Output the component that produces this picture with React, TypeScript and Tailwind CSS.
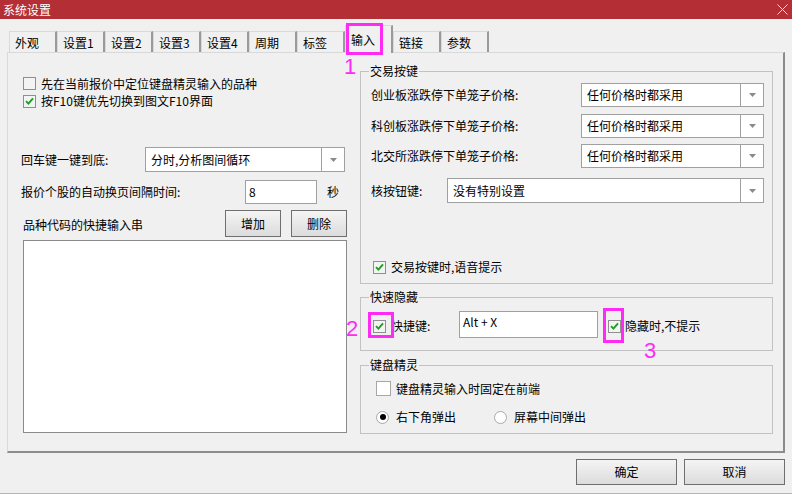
import React from "react";

function Check({ checked, big }: { checked?: boolean; big?: boolean }) {
  return (
    <span
      className={
        (big ? "w-[15px] h-[15px] bg-white border-[#a7a7a7] " : "w-[13px] h-[13px] bg-[#f3f3f3] border-[#8f8f8f] ") +
        "border flex items-center justify-center shrink-0"
      }
    >
      {checked && (
        <svg width="9" height="8" viewBox="0 0 9 8">
          <path d="M1 4.2 L3.4 6.6 L8 1.4" stroke="#1f9d22" strokeWidth="1.9" fill="none" />
        </svg>
      )}
    </span>
  );
}

function Radio({ checked }: { checked?: boolean }) {
  return (
    <span className="w-[13px] h-[13px] rounded-full border border-[#a9a9a9] bg-white flex items-center justify-center shrink-0">
      {checked && <span className="w-[6px] h-[6px] rounded-full bg-black" />}
    </span>
  );
}

function Arrow() {
  return (
    <svg width="7" height="4" viewBox="0 0 7 4">
      <path d="M0 0 H7 L3.5 4 Z" fill="#8a8a8a" />
    </svg>
  );
}

function Select({ text, className }: { text: string; className: string }) {
  return (
    <div className={className + " bg-white border border-[#a0a0a0] flex shrink-0"}>
      <div className="flex-1 flex items-center pl-[5px] whitespace-nowrap">{text}</div>
      <div className="w-[23px] border-l border-[#a0a0a0] flex items-center justify-center">
        <Arrow />
      </div>
    </div>
  );
}

function Btn({ text, className }: { text: string; className: string }) {
  return (
    <div
      className={
        className +
        " border border-[#6f6f6f] bg-gradient-to-b from-[#f4f4f4] to-[#dcdcdc] flex items-center justify-center shrink-0"
      }
    >
      {text}
    </div>
  );
}

const tabs = ["外观", "设置1", "设置2", "设置3", "设置4", "周期", "标签", "输入", "链接", "参数"];

export default function App() {
  return (
    <div className="relative w-[792px] h-[494px] bg-[#f0f0f0] border-b border-[#b4b4b4] overflow-hidden font-['Noto_Sans_CJK_SC','Microsoft_YaHei',sans-serif] text-[12px] leading-[16px] text-black">
      {/* title bar */}
      <div className="h-[19px] bg-[#b32e35] flex items-center justify-between pl-[3px] pr-[4px]">
        <span className="text-white text-[12px] leading-[16px]">系统设置</span>
        <svg width="11" height="11" viewBox="0 0 11 11">
          <path d="M0.5 0.5 L10.5 10.5 M10.5 0.5 L0.5 10.5" stroke="#f4dada" strokeWidth="1" />
        </svg>
      </div>

      {/* tabs */}
      <div className="mt-[6px] h-[27px] pl-[9px] flex items-end relative z-10">
        {tabs.map((t) =>
          t === "输入" ? (
            <div
              key={t}
              className="w-[48px] h-[28px] mb-[-1px] bg-[#f0f0f0] border-t border-l border-[#d9d9d9] border-r-2 border-r-[#9a9a9a] pl-[5px] pt-[6px]"
            >
              {t}
            </div>
          ) : (
            <div
              key={t}
              className="w-[48px] h-[21px] border-t border-l border-[#d9d9d9] border-r-2 border-r-[#9a9a9a] pl-[5px] pt-[3px]"
            >
              {t}
            </div>
          )
        )}
      </div>

      {/* panel */}
      <div className="ml-[7px] w-[778px] h-[401px] border-t border-l border-[#d9d9d9] border-r-2 border-b-2 border-r-[#8c8c8c] border-b-[#8c8c8c] flex">
        {/* left column */}
        <div className="w-[352px] pl-[13px] flex flex-col">
          <div className="mt-[21px] h-[19px] pl-[2px] flex items-center gap-[5px]">
            <Check />
            <span>先在当前报价中定位键盘精灵输入的品种</span>
          </div>
          <div className="h-[16px] pl-[2px] flex items-center gap-[5px]">
            <Check checked />
            <span>按F10键优先切换到图文F10界面</span>
          </div>
          <div className="mt-[38px] h-[25px] flex items-center">
            <span className="w-[124px]">回车键一键到底:</span>
            <Select text="分时,分析图间循环" className="w-[200px] h-[25px]" />
          </div>
          <div className="mt-[8px] h-[24px] flex items-center">
            <span className="w-[224px]">报价个股的自动换页间隔时间:</span>
            <div className="w-[72px] h-[24px] bg-white border border-[#a0a0a0] pl-[3px] flex items-center">8</div>
            <span className="ml-[10px]">秒</span>
          </div>
          <div className="mt-[6px] h-[27px] flex items-center">
            <span className="w-[204px] pl-[2px] pt-[3px]">品种代码的快捷输入串</span>
            <Btn text="增加" className="w-[56px] h-[27px]" />
            <Btn text="删除" className="ml-[10px] w-[56px] h-[27px]" />
          </div>
          <div className="mt-[3px] ml-[2px] w-[324px] h-[193px] bg-white border border-[#8a8a8a]" />
        </div>

        {/* right column */}
        <div className="w-[413px] flex flex-col">
          {/* group 1 */}
          <div className="relative mt-[18px] h-[213px] border border-[#c2c2c2] pl-[10px] pr-[8px] flex flex-col">
            <span className="absolute left-[8px] top-[-9px] px-[1px] bg-[#f0f0f0]">交易按键</span>
            <div className="mt-[11px] h-[24px] flex items-center justify-between">
              <span>创业板涨跌停下单笼子价格:</span>
              <Select text="任何价格时都采用" className="w-[183px] h-[24px]" />
            </div>
            <div className="mt-[7px] h-[24px] flex items-center justify-between">
              <span>科创板涨跌停下单笼子价格:</span>
              <Select text="任何价格时都采用" className="w-[183px] h-[24px]" />
            </div>
            <div className="mt-[6px] h-[24px] flex items-center justify-between">
              <span>北交所涨跌停下单笼子价格:</span>
              <Select text="任何价格时都采用" className="w-[183px] h-[24px]" />
            </div>
            <div className="mt-[10px] h-[25px] flex items-center justify-between">
              <span>核按钮键:</span>
              <Select text="没有特别设置" className="w-[317px] h-[25px]" />
            </div>
            <div className="mt-[56px] h-[16px] pl-[2px] flex items-center gap-[5px]">
              <Check checked />
              <span>交易按键时,语音提示</span>
            </div>
          </div>

          {/* group 2 */}
          <div className="relative mt-[13px] h-[54px] border border-[#c2c2c2] pl-[12px]">
            <span className="absolute left-[8px] top-[-9px] px-[1px] bg-[#f0f0f0]">快速隐藏</span>
            <div className="mt-[13px] h-[27px] flex items-center">
              <span className="mt-[3px]">
                <Check checked />
              </span>
              <span className="w-[73px] pl-[5px] mt-[3px]">快捷键:</span>
              <div className="w-[139px] h-[27px] bg-white border border-[#a0a0a0] pl-[3px] pt-[2px]">Alt + X</div>
              <span className="ml-[10px] mt-[3px]">
                <Check checked />
              </span>
              <span className="pl-[4px] mt-[3px]">隐藏时,不提示</span>
            </div>
          </div>

          {/* group 3 */}
          <div className="relative mt-[14px] h-[69px] border border-[#c2c2c2] pl-[15px]">
            <span className="absolute left-[8px] top-[-9px] px-[1px] bg-[#f0f0f0]">键盘精灵</span>
            <div className="mt-[15px] h-[15px] flex items-center">
              <Check big />
              <span className="pl-[5px]">键盘精灵输入时固定在前端</span>
            </div>
            <div className="mt-[13px] h-[16px] flex items-center">
              <Radio checked />
              <span className="pl-[7px] w-[105px]">右下角弹出</span>
              <Radio />
              <span className="pl-[7px]">屏幕中间弹出</span>
            </div>
          </div>
        </div>
      </div>

      {/* bottom buttons */}
      <div className="mt-[6px] pr-[7px] flex justify-end gap-[7px]">
        <Btn text="确定" className="w-[101px] h-[26px]" />
        <Btn text="取消" className="w-[101px] h-[26px]" />
      </div>

      {/* annotations */}
      <div className="absolute left-[346px] top-[23px] w-[37px] h-[32px] border-[3px] border-[#ff2bf5] z-20" />
      <div className="absolute left-[344px] top-[55px] text-[#ff2bf5] text-[22px] leading-[24px] font-['Liberation_Sans',sans-serif] z-20">1</div>
      <div className="absolute left-[368px] top-[312px] w-[26px] h-[26px] border-[3px] border-[#ff2bf5] z-20" />
      <div className="absolute left-[346px] top-[317px] text-[#ff2bf5] text-[22px] leading-[24px] font-['Liberation_Sans',sans-serif] z-20">2</div>
      <div className="absolute left-[603px] top-[308px] w-[21px] h-[35px] border-[3px] border-[#ff2bf5] z-20" />
      <div className="absolute left-[644px] top-[339px] text-[#ff2bf5] text-[22px] leading-[24px] font-['Liberation_Sans',sans-serif] z-20">3</div>
    </div>
  );
}
